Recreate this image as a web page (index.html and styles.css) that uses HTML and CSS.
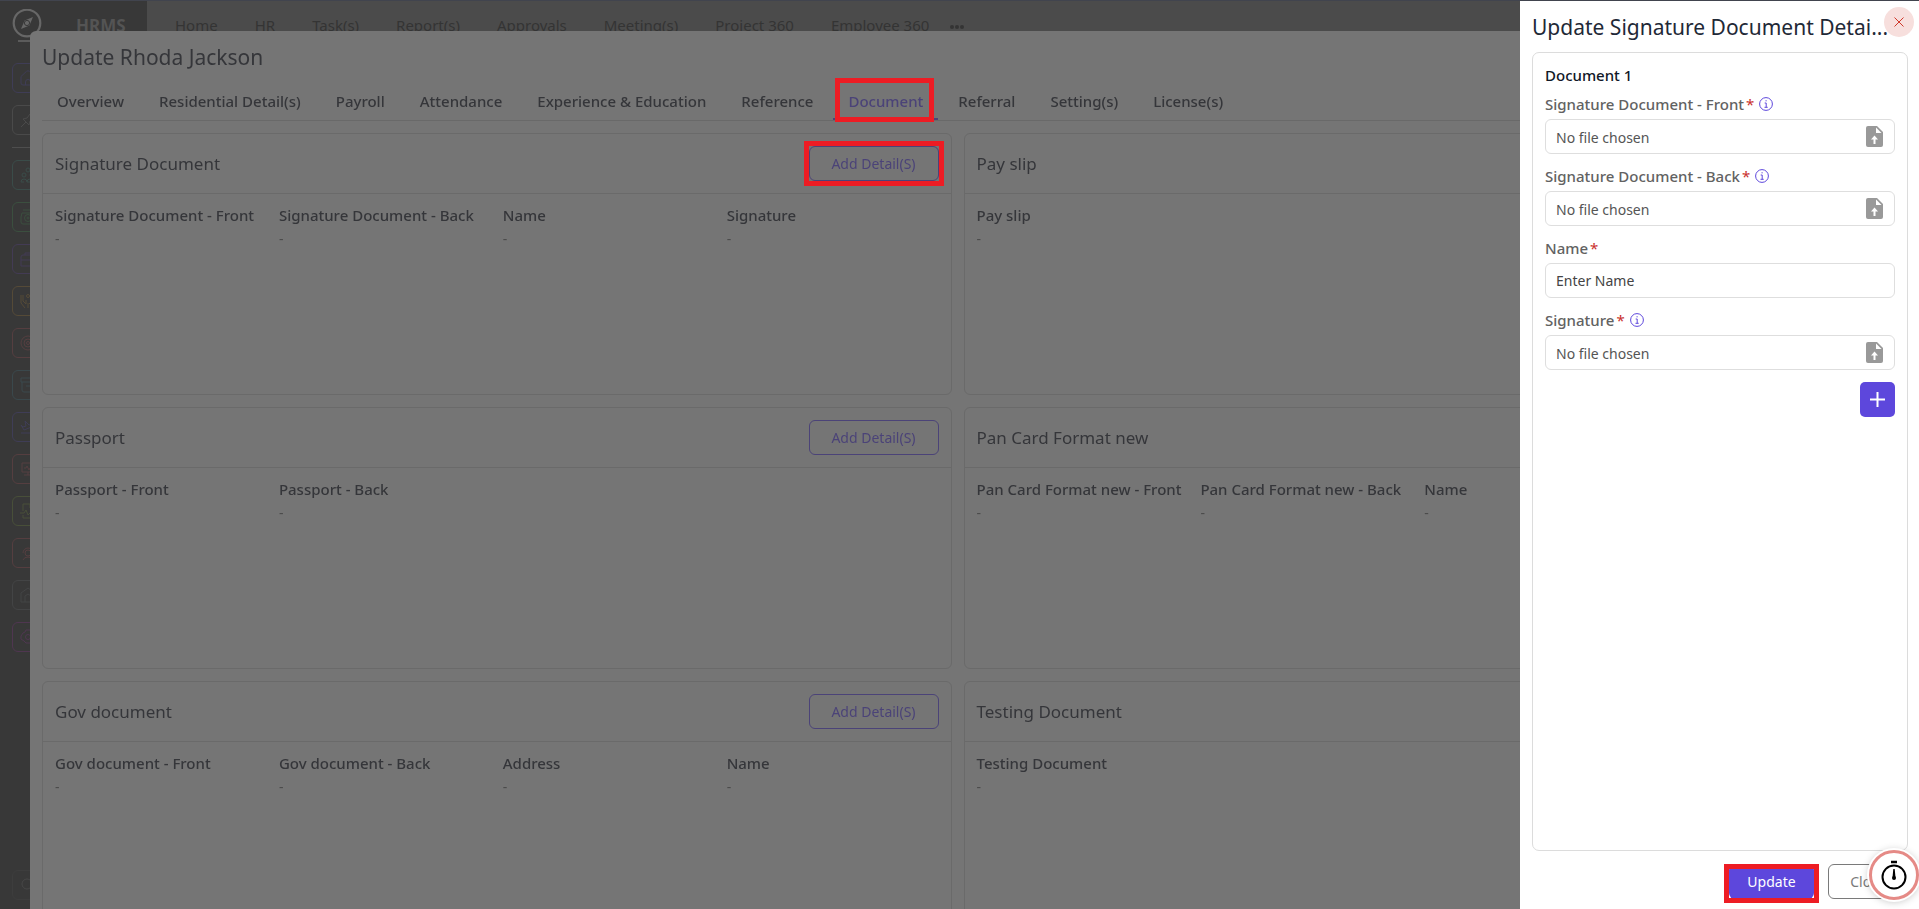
FILE: index.html
```html
<!DOCTYPE html>
<html lang="en">
<head>
    <meta charset="UTF-8">
    <meta name="viewport" content="width=device-width, initial-scale=1.0">
    <title>HRMS - Update Rhoda Jackson</title>
    <link rel="stylesheet" href="styles.css">
</head>
<body>
    <!-- Top bar -->
    <header class="topbar">
        <div class="brand">
            <svg class="logo" viewBox="0 0 30 36" fill="none" stroke="currentColor">
                <circle cx="15" cy="14" r="13.3" stroke-width="2.2"/>
                <path d="M21 8l-3.600 8.400L9 20l3.600-8.400z" fill="currentColor" stroke="none"/>
                <circle cx="15" cy="14" r="2.600" fill="currentColor" stroke="#383838"/>
                <path d="M6 32h20" stroke-width="1.500"/>
            </svg>
            <span class="brand-name">HRMS</span>
        </div>
        <nav class="main-nav">
            <a href="#">Home</a>
            <a href="#">HR</a>
            <a href="#">Task(s)</a>
            <a href="#">Report(s)</a>
            <a href="#">Approvals</a>
            <a href="#">Meeting(s)</a>
            <a href="#">Project 360</a>
            <a href="#">Employee 360</a>
            <a href="#" class="more" aria-label="More"><svg viewBox="0 0 14 4" fill="currentColor"><circle cx="2" cy="2" r="2"/><circle cx="7" cy="2" r="2"/><circle cx="12" cy="2" r="2"/></svg></a>
        </nav>
    </header>

    <!-- Sidebar -->
    <aside class="sidebar">
        <button class="side-btn indigo" aria-label="Home"><svg viewBox="0 0 16 16"><path d="M1 6.500 6.500 1.300q1.500-1 3 0L15 6.500V13q0 2-2 2H3q-2 0-2-2zM5.500 15v-3a2.500 2.500 0 0 1 5 0v3"/></svg></button>
        <button class="side-btn grey" aria-label="Pinned"><svg viewBox="0 0 16 16"><path d="M1 15l5-5M3 7l6 6 1-4 4-3-4-4-3 4z"/></svg></button>
        <hr class="side-line">
        <button class="side-btn teal" aria-label="Team"><svg viewBox="0 0 16 16"><circle cx="8" cy="3" r="2"/><circle cx="4" cy="8" r="2"/><circle cx="12" cy="8" r="2"/><path d="M1 15q0-3 3-3t3 3q0-3 3-3t4 3M1 15h3m3 0h3"/></svg></button>
        <button class="side-btn green" aria-label="Payroll"><svg viewBox="0 0 16 16"><path d="M3 1h12M2 4h13v11H3q-2 0-2-2V8z"/><circle cx="8" cy="9" r="3.500"/><circle cx="8" cy="9" r="1"/></svg></button>
        <button class="side-btn violet" aria-label="Jobs"><svg viewBox="0 0 16 16"><path d="M3 4h10q2 0 2 2v7q0 2-2 2H1V6q0-2 2-2zM5 4V2h6v2M1 9h14"/></svg></button>
        <button class="side-btn amber" aria-label="Benefits"><svg viewBox="0 0 16 16"><path d="M1 2v8l4 5M3 2v6l3 3V7M8 15v-5M15 2v8l-4 5M12 2v6l-3 3"/><circle cx="8" cy="3" r="1.500"/></svg></button>
        <button class="side-btn red" aria-label="Goals"><svg viewBox="0 0 16 16"><circle cx="8" cy="8" r="7"/><circle cx="8" cy="8" r="4"/><circle cx="8" cy="8" r="1.500"/></svg></button>
        <button class="side-btn cyan" aria-label="Assets"><svg viewBox="0 0 16 16"><path d="M1 1h14v4H1zM2 5v8q0 2 2 2h10V5M6 9h4"/></svg></button>
        <button class="side-btn indigo" aria-label="Travel"><svg viewBox="0 0 16 16"><path d="M1 14h14M1 6l3 5 10-4q1-2-1-2L9 6 5 2l1 5-3 1z"/></svg></button>
        <button class="side-btn red" aria-label="Monitor"><svg viewBox="0 0 16 16"><path d="M2 2h12v9H2zM4 7h2l1-2 2 4 1-2h2M8 11v3M4 14h8"/></svg></button>
        <button class="side-btn lime" aria-label="Reports"><svg viewBox="0 0 16 16"><path d="M3 8V1h7l4 4v10H3v-3M0 10h4l2-3 2 5 2-2h3M10 1v4h4"/></svg></button>
        <button class="side-btn red" aria-label="Support"><svg viewBox="0 0 16 16"><circle cx="8" cy="8" r="3"/><path d="M3 8a5 5 0 0 1 10 0M3 15q1-3 5-3t5 3"/></svg></button>
        <button class="side-btn slate" aria-label="Workspace"><svg viewBox="0 0 16 16"><path d="M1 6l7-5 7 5v9H1zM5 15V9l3-2 3 2v6"/></svg></button>
        <button class="side-btn pink" aria-label="Settings"><svg viewBox="0 0 16 16"><path d="M6 1h4l1 2 3 1 1 3-1 2-1 3-3 2H6l-2-2-3-2V7l2-3 2-1z"/><circle cx="8" cy="8" r="2.500"/></svg></button>
        <button class="side-btn side-search" aria-label="Search"><svg viewBox="0 0 16 16"><circle cx="7" cy="7" r="5"/><path d="M11 11l4 4"/></svg></button>
    </aside>

    <!-- Employee modal -->
    <main class="modal">
        <h1 class="modal-title">Update Rhoda Jackson</h1>
        <nav class="tabs">
            <a href="#">Overview</a>
            <a href="#">Residential Detail(s)</a>
            <a href="#">Payroll</a>
            <a href="#">Attendance</a>
            <a href="#">Experience &amp; Education</a>
            <a href="#">Reference</a>
            <a href="#" class="active marked">Document</a>
            <a href="#">Referral</a>
            <a href="#">Setting(s)</a>
            <a href="#">License(s)</a>
        </nav>
        <div class="cards">
            <section class="card">
                <div class="card-head"><h2>Signature Document</h2><span class="marked"><button class="outline-btn">Add Detail(S)</button></span></div>
                <dl class="fields">
                    <div><dt>Signature Document - Front</dt><dd>-</dd></div>
                    <div><dt>Signature Document - Back</dt><dd>-</dd></div>
                    <div><dt>Name</dt><dd>-</dd></div>
                    <div><dt>Signature</dt><dd>-</dd></div>
                </dl>
            </section>
            <section class="card">
                <div class="card-head"><h2>Pay slip</h2></div>
                <dl class="fields">
                    <div><dt>Pay slip</dt><dd>-</dd></div>
                </dl>
            </section>
            <section class="card">
                <div class="card-head"><h2>Passport</h2><button class="outline-btn">Add Detail(S)</button></div>
                <dl class="fields">
                    <div><dt>Passport - Front</dt><dd>-</dd></div>
                    <div><dt>Passport - Back</dt><dd>-</dd></div>
                </dl>
            </section>
            <section class="card">
                <div class="card-head"><h2>Pan Card Format new</h2></div>
                <dl class="fields">
                    <div><dt>Pan Card Format new - Front</dt><dd>-</dd></div>
                    <div><dt>Pan Card Format new - Back</dt><dd>-</dd></div>
                    <div><dt>Name</dt><dd>-</dd></div>
                </dl>
            </section>
            <section class="card">
                <div class="card-head"><h2>Gov document</h2><button class="outline-btn">Add Detail(S)</button></div>
                <dl class="fields">
                    <div><dt>Gov document - Front</dt><dd>-</dd></div>
                    <div><dt>Gov document - Back</dt><dd>-</dd></div>
                    <div><dt>Address</dt><dd>-</dd></div>
                    <div><dt>Name</dt><dd>-</dd></div>
                </dl>
            </section>
            <section class="card">
                <div class="card-head"><h2>Testing Document</h2></div>
                <dl class="fields">
                    <div><dt>Testing Document</dt><dd>-</dd></div>
                </dl>
            </section>
        </div>
    </main>

    <!-- Signature document drawer -->
    <form class="drawer">
        <div class="drawer-head">
            <h2>Update Signature Document Detai...</h2>
            <button type="button" class="close-btn" aria-label="Close"><svg viewBox="0 0 10 10" fill="none" stroke="currentColor"><path d="M.5.5l9 9M9.500.5l-9 9"/></svg></button>
        </div>
        <div class="panel">
            <h3>Document 1</h3>
            <div class="field">
                <label for="front">Signature Document - Front<b>*</b>
                    <svg class="info" viewBox="0 0 14 14"><circle cx="7" cy="7" r="6.400"/><path d="M5.700 6h1.500v4.300M5.500 10.300h3.200M6.500 3.800h1.200"/></svg></label>
                <div class="file-box">
                    <span>No file chosen</span>
                    <svg class="upload" viewBox="0 0 17 21"><path d="M2 0h9l6 6v13q0 2-2 2H2q-2 0-2-2V2q0-2 2-2z" fill="#999"/><path d="M10 1.500V7h5.500z" fill="#fff"/><path d="M8.500 9.500 12 13.500H9.500V18h-2v-4.500H5z" fill="#fff"/></svg>
                    <input type="file" id="front">
                </div>
            </div>
            <div class="field">
                <label for="back">Signature Document - Back<b>*</b>
                    <svg class="info" viewBox="0 0 14 14"><circle cx="7" cy="7" r="6.400"/><path d="M5.700 6h1.500v4.300M5.500 10.300h3.200M6.500 3.800h1.200"/></svg></label>
                <div class="file-box">
                    <span>No file chosen</span>
                    <svg class="upload" viewBox="0 0 17 21"><path d="M2 0h9l6 6v13q0 2-2 2H2q-2 0-2-2V2q0-2 2-2z" fill="#999"/><path d="M10 1.500V7h5.500z" fill="#fff"/><path d="M8.500 9.500 12 13.500H9.500V18h-2v-4.500H5z" fill="#fff"/></svg>
                    <input type="file" id="back">
                </div>
            </div>
            <div class="field">
                <label for="name">Name<b>*</b></label>
                <input type="text" class="text-box" id="name" placeholder="Enter Name">
            </div>
            <div class="field">
                <label for="signature">Signature<b>*</b>
                    <svg class="info" viewBox="0 0 14 14"><circle cx="7" cy="7" r="6.400"/><path d="M5.700 6h1.500v4.300M5.500 10.300h3.200M6.500 3.800h1.200"/></svg></label>
                <div class="file-box">
                    <span>No file chosen</span>
                    <svg class="upload" viewBox="0 0 17 21"><path d="M2 0h9l6 6v13q0 2-2 2H2q-2 0-2-2V2q0-2 2-2z" fill="#999"/><path d="M10 1.500V7h5.500z" fill="#fff"/><path d="M8.500 9.500 12 13.500H9.500V18h-2v-4.500H5z" fill="#fff"/></svg>
                    <input type="file" id="signature">
                </div>
            </div>
            <button type="button" class="add-btn" aria-label="Add document"><svg viewBox="0 0 15 15" stroke="currentColor" stroke-width="2"><path d="M7.500 0v15M0 7.500h15"/></svg></button>
        </div>
        <div class="drawer-foot">
            <span class="marked"><button type="button" class="update-btn">Update</button></span>
            <button type="button" class="cancel-btn">Close</button>
        </div>
    </form>

    <!-- Floating timer -->
    <button class="timer" aria-label="Timer">
        <svg viewBox="0 0 26 30" fill="none" stroke="#000" stroke-width="2">
            <circle cx="13" cy="17" r="11.500"/>
            <path d="M10 2h6" stroke-width="2.500"/>
            <path d="M12.300 9h1.400l.8 8.500h-3z" fill="#000" stroke="none"/>
            <circle cx="13" cy="18" r="2" fill="#000" stroke="none"/>
        </svg>
    </button>
</body>
</html>
```
FILE: styles.css
```css
* {
    margin: 0;
    padding: 0;
    box-sizing: border-box;
}

body {
    font-family: 'Noto Sans', 'Open Sans', sans-serif;
    font-size: 14px;
    line-height: 20px;
    height: 100vh;
    background: #383838;
    overflow: hidden;
}

h1, h2, h3 {
    font-weight: 400;
}

a {
    color: inherit;
    text-decoration: none;
}

button, input {
    font: inherit;
}

button {
    cursor: pointer;
}

/* Top bar */
.topbar {
    display: flex;
    height: 50px;
    border-top: 1px solid #41444e;
    background: #4b4b4b;
}

.brand {
    display: flex;
    align-items: flex-start;
    gap: 34px;
    width: 147px;
    padding: 8px 0 0 12px;
    background: #383838;
}

.logo {
    width: 30px;
    height: 36px;
    color: #676767;
}

.brand-name {
    padding-top: 7px;
    font-size: 17px;
    font-weight: 700;
    color: #545454;
}

.main-nav {
    display: flex;
    gap: 37px;
    padding: 14px 28px;
    font-size: 15px;
    color: #343434;
}

.main-nav .more {
    margin-left: -16px;
}

.more svg {
    width: 14px;
    height: 4px;
    vertical-align: middle;
}

/* Sidebar */
.sidebar {
    display: flex;
    flex-direction: column;
    gap: 12px;
    width: 54px;
    height: calc(100vh - 50px);
    padding: 13px 12px 9px;
}

.side-btn {
    width: 30px;
    height: 30px;
    padding: 6px 7px;
    border: 1px solid currentColor;
    border-radius: 6px;
    background: none;
}

.side-btn svg {
    display: block;
    width: 16px;
    height: 16px;
    fill: none;
    stroke: currentColor;
}

.side-line {
    border: 0;
    border-top: 1px solid #4e4e4e;
}

.side-search {
    margin-top: auto;
    color: #474747;
    border-color: #3d3d3d;
}

.indigo { color: #3f3d56; }
.grey { color: #4a4a4a; }
.slate { color: #434445; }
.teal { color: #3a4c49; }
.green { color: #3b4f3f; }
.violet { color: #433b54; }
.amber { color: #554a37; }
.red { color: #553e40; }
.cyan { color: #3a484c; }
.lime { color: #484f39; }
.pink { color: #4f3650; }

/* Employee modal */
.modal {
    position: fixed;
    top: 31px;
    left: 30px;
    right: 34px;
    bottom: 0;
    padding: 0 12px;
    border-radius: 6px 6px 0 0;
    background: #757575;
    color: #35363a;
    overflow: hidden;
}

.modal-title {
    padding: 12px 0 14px;
    font-size: 21px;
    line-height: 28px;
}

.tabs {
    display: flex;
    gap: 5px;
    border-bottom: 1px solid #696969;
    font-size: 15px;
    font-weight: 500;
}

.tabs a {
    position: relative;
    padding: 6px 15px 9px;
}

.tabs .active {
    padding-bottom: 7px;
    color: #4b4378;
    border-bottom: 2px solid #4b4378;
}

/* Red highlight frames */
.marked {
    position: relative;
}

.marked::after {
    content: '';
    position: absolute;
    inset: -5px;
    border: 5px solid #ed1c24;
    pointer-events: none;
}

.tabs .marked::after {
    inset: -7px 4px -4px 2px;
}

.cards {
    display: grid;
    grid-template-columns: 1fr 1fr;
    gap: 12px;
    padding-top: 12px;
}

.card {
    height: 262px;
    border: 1px solid #6a6a6a;
    border-radius: 6px;
}

.card-head {
    display: flex;
    justify-content: space-between;
    align-items: center;
    height: 60px;
    padding: 0 12px;
    border-bottom: 1px solid #6a6a6a;
}

.card-head h2 {
    font-size: 17px;
}

.outline-btn {
    display: block;
    width: 130px;
    height: 35px;
    border: 1px solid #4b4378;
    border-radius: 6px;
    background: none;
    color: #4b4378;
}

.fields {
    display: grid;
    grid-template-columns: repeat(4, 1fr);
    gap: 12px;
    padding: 11px 12px;
}

.fields > div {
    min-width: 0;
}

.fields dt {
    font-size: 15px;
    font-weight: 500;
    white-space: nowrap;
}

.fields dd {
    line-height: 28px;
    color: #4c4c4c;
}

/* Drawer */
.drawer {
    position: fixed;
    top: 1px;
    right: 0;
    bottom: 0;
    display: flex;
    flex-direction: column;
    width: 399px;
    padding: 0 11px 10px 12px;
    background: #fff;
}

.drawer-head {
    display: flex;
    align-items: center;
    height: 51px;
    margin-right: -6px;
}

.drawer-head h2 {
    flex: 1;
    min-width: 0;
    font-size: 21px;
    line-height: 28px;
    color: #1f2937;
    white-space: nowrap;
}

.close-btn {
    flex: none;
    width: 30px;
    height: 30px;
    margin-bottom: 10px;
    border: 0;
    border-radius: 50%;
    background: #f7dfdd;
    color: #d0392b;
}

.close-btn svg {
    width: 10px;
    height: 10px;
}

.panel {
    flex: 1;
    display: flex;
    flex-direction: column;
    gap: 12px;
    padding: 12px;
    border: 1px solid #dcdcdc;
    border-radius: 7px;
}

.panel h3 {
    margin-bottom: -3px;
    font-size: 15px;
    font-weight: 500;
    color: #111827;
}

.field label {
    display: flex;
    align-items: center;
    height: 25px;
    padding-bottom: 6px;
    font-size: 15px;
    font-weight: 500;
    color: #626262;
}

.field b {
    margin-left: 2px;
    font-weight: 400;
    color: #c9302c;
}

.info {
    width: 14px;
    height: 14px;
    margin-left: 5px;
    fill: none;
    stroke: #5d47dc;
}

.file-box, .text-box {
    width: 100%;
    height: 35px;
    padding: 0 11px 0 10px;
    border: 1px solid #dedede;
    border-radius: 6px;
    color: #555;
}

.file-box {
    position: relative;
    display: flex;
    justify-content: space-between;
    align-items: center;
}

.file-box span {
    padding-top: 2px;
}

.file-box input {
    position: absolute;
    inset: 0;
    width: 100%;
    opacity: 0;
}

.upload {
    width: 17px;
    height: 21px;
}

.text-box {
    display: block;
}

.text-box::placeholder {
    color: #444;
    opacity: 1;
}

.add-btn {
    align-self: flex-end;
    width: 35px;
    height: 35px;
    padding: 10px;
    border: 0;
    border-radius: 5px;
    background: #5d47dc;
    color: #fff;
}

.add-btn svg {
    display: block;
    width: 15px;
    height: 15px;
}

.drawer-foot {
    display: flex;
    justify-content: flex-end;
    gap: 14px;
    padding-top: 13px;
}

.update-btn, .cancel-btn {
    display: block;
    height: 35px;
    border-radius: 6px;
}

.update-btn {
    width: 85px;
    border: 0;
    background: #5d47dc;
    color: #fff;
}

.drawer-foot .marked::after {
    inset: 0 -5px -4px;
}

.cancel-btn {
    width: 80px;
    border: 1px solid #7a7a7a;
    background: #fff;
    color: #7a7a7a;
}

/* Floating timer */
.timer {
    position: fixed;
    right: 0;
    bottom: 9px;
    display: grid;
    place-items: center;
    width: 50px;
    height: 50px;
    border: 3px solid #e58a86;
    border-radius: 50%;
    background: #fff;
    box-shadow: 0 0 0 2px #fff, 0 1px 8px rgba(0, 0, 0, 0.3);
}

.timer svg {
    width: 26px;
    height: 30px;
}
```
